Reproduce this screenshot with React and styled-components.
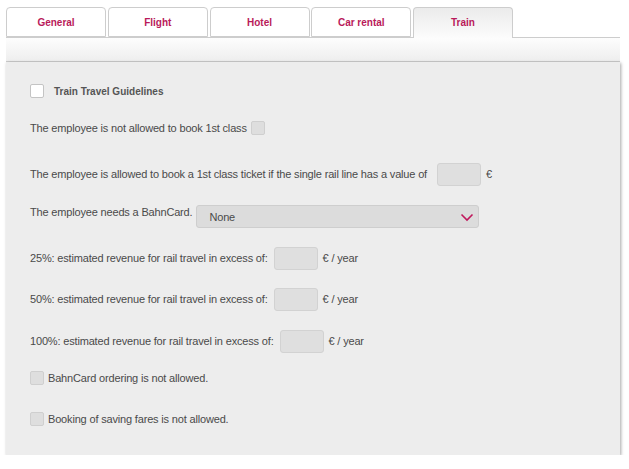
import { createGlobalStyle } from 'styled-components';
import styled from 'styled-components';

const GlobalStyle = createGlobalStyle`
    body {
        margin: 0;
        background: #fff;
        font-family: "Liberation Sans", Arial, sans-serif;
    }
`;

const Page = styled.div`
    width: 614px;
    padding: 7px 9px 0 6px;
`;

const TabBar = styled.div`
    display: flex;
    gap: 1.75px;
    height: 30px;
    align-items: flex-start;
`;

const Tab = styled.div`
    position: relative;
    z-index: ${(p) => (p.$active ? 1 : 0)};
    box-sizing: border-box;
    width: 100px;
    height: ${(p) => (p.$active ? '31px' : '30px')};
    border: 1px solid #cdcdcd;
    border-bottom: ${(p) => (p.$active ? 'none' : '1px solid #cdcdcd')};
    border-radius: 4px 4px 0 0;
    background: ${(p) =>
        p.$active ? 'linear-gradient(#ebebeb, #fcfcfc)' : '#fff'};
    color: #b91a5a;
    font-size: 10px;
    font-weight: bold;
    display: flex;
    align-items: center;
    justify-content: center;
    padding-bottom: ${(p) => (p.$active ? '1px' : '0')};
`;

const SubBar = styled.div`
    height: 23px;
    border-top: 1px solid #cdcdcd;
    border-bottom: 1px solid #cdcdcd;
    background: linear-gradient(#fdfdfd, #eeeeee);
`;

const Panel = styled.div`
    background: #ededed;
    padding: 17px 24px 24px;
    box-shadow: 1px 1px 3px rgba(0, 0, 0, 0.35);
    color: #4a4a4a;
    font-size: 11px;
    letter-spacing: -0.17px;
`;

const Row = styled.div`
    display: flex;
    align-items: ${(p) => p.$align || 'center'};
    height: ${(p) => p.$h || 24}px;
    margin-top: ${(p) => p.$mt || 0}px;
`;

const Heading = styled.span`
    font-size: 10px;
    font-weight: bold;
    letter-spacing: 0;
    color: #555;
    margin-left: 10px;
`;

const Label = styled.span`
    line-height: 14px;
    white-space: nowrap;
`;

const Check = styled.span`
    box-sizing: border-box;
    width: 14px;
    height: 14px;
    border: 1px solid ${(p) => (p.$white ? '#c4c4c4' : '#cfcfcf')};
    border-radius: 2px;
    background: ${(p) => (p.$white ? '#fff' : '#dedede')};
    margin-left: ${(p) => p.$ml || 0}px;
    margin-right: ${(p) => p.$mr || 0}px;
    flex: none;
`;

const Field = styled.input`
    box-sizing: border-box;
    width: 44px;
    height: 23px;
    border: 1px solid #d2d2d2;
    border-radius: 3px;
    background: #dfdfdf;
    margin: 0 5px 0 ${(p) => p.$ml || 8}px;
    padding: 0;
    outline: none;
`;

const Select = styled.div`
    box-sizing: border-box;
    width: 283px;
    height: 23px;
    margin-left: 4px;
    border: 1px solid #cecece;
    border-radius: 3px;
    background: #dcdcdc;
    display: flex;
    align-items: center;
    justify-content: space-between;
    padding: 0 4px 0 12px;
    color: #4a4a4a;
`;

const Chevron = () => (
    <svg width="14" height="10" viewBox="0 0 14 10">
        <path d="M1.5 2.5 L7 8 L12.5 2.5" fill="none" stroke="#c0185c" strokeWidth="1.6" />
    </svg>
);

const tabs = ['General', 'Flight', 'Hotel', 'Car rental', 'Train'];

const revenue = [
    { pct: '25%', mt: 18 },
    { pct: '50%', mt: 17 },
    { pct: '100%', mt: 18 },
];

const App = () => {
    return (
        <Page>
            <GlobalStyle />
            <TabBar>
                {tabs.map((t) => (
                    <Tab key={t} $active={t === 'Train'}>
                        {t}
                    </Tab>
                ))}
            </TabBar>
            <SubBar />
            <Panel>
                <Row>
                    <Check $white />
                    <Heading>Train Travel Guidelines</Heading>
                </Row>
                <Row $mt={13}>
                    <Label>The employee is not allowed to book 1st class</Label>
                    <Check $ml={4} />
                </Row>
                <Row $mt={22}>
                    <Label>
                        The employee is allowed to book a 1st class ticket if the single rail line has a value of
                    </Label>
                    <Field readOnly $ml={10} />
                    <Label>€</Label>
                </Row>
                <Row $mt={19} $h={23} $align="flex-start">
                    <Label>The employee needs a BahnCard.</Label>
                    <Select>
                        <span>None</span>
                        <Chevron />
                    </Select>
                </Row>
                {revenue.map((r) => (
                    <Row key={r.pct} $mt={r.mt}>
                        <Label>{r.pct}: estimated revenue for rail travel in excess of:</Label>
                        <Field readOnly $ml={6} />
                        <Label>€ / year</Label>
                    </Row>
                ))}
                <Row $mt={13}>
                    <Check $mr={4} />
                    <Label>BahnCard ordering is not allowed.</Label>
                </Row>
                <Row $mt={17}>
                    <Check $mr={4} />
                    <Label>Booking of saving fares is not allowed.</Label>
                </Row>
            </Panel>
        </Page>
    );
};

export default App;
